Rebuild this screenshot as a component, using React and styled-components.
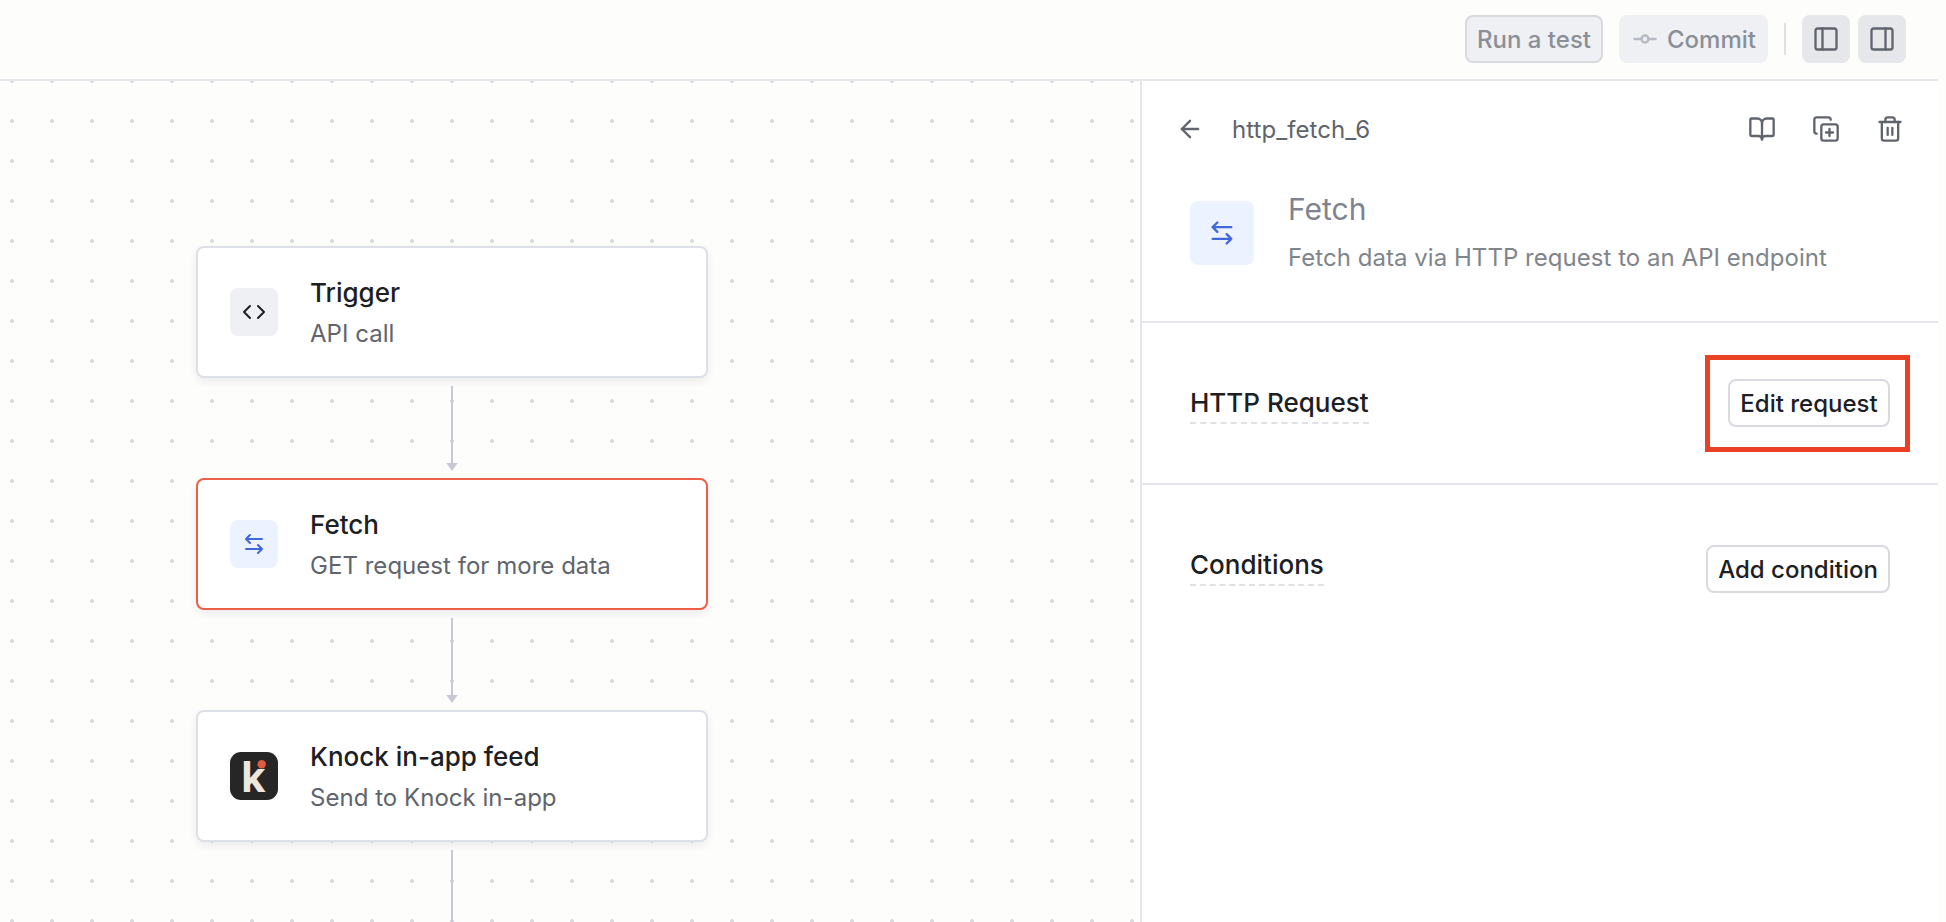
import React from "react";
import styled, { createGlobalStyle, css } from "styled-components";
import {
  ArrowLeft,
  BookOpen,
  CopyPlus,
  GitCommitHorizontal,
  PanelLeft,
  PanelRight,
  Trash2,
} from "lucide-react";

const GlobalStyle = createGlobalStyle`
  * { box-sizing: border-box; }
  body {
    margin: 0;
    overflow: hidden;
    background: #fdfdfc;
    font-family: Inter, "Liberation Sans", sans-serif;
    color: #1c2024;
  }
  h1, h2, h3, p { margin: 0; }
  svg { display: block; flex: none; overflow: visible; }
`;

const Page = styled.div`
  display: flex;
  flex-direction: column;
  width: 100vw;
  height: 100vh;
  padding-right: 8px;
`;

const TopBar = styled.header`
  display: flex;
  align-items: center;
  justify-content: flex-end;
  flex: none;
  gap: 16px;
  height: 81px;
  padding: 0 32px 1px 0;
  border-bottom: 2px solid #e5e6eb;
`;

const buttonVariants = {
  outline: css`
    background: #fff;
    border-color: #d9d9e0;
    color: #1c2024;
  `,
  disabled: css`
    background: #eff0f3;
    border-color: #d8dade;
    color: #8a8f97;
  `,
  soft: css`
    background: #eff0f3;
    border-color: #eff0f3;
    color: #8a8f97;
  `,
};

const Button = styled.button`
  display: flex;
  align-items: center;
  justify-content: center;
  gap: 8px;
  width: ${(p) => p.$width}px;
  height: 48px;
  padding: 0;
  border: 2px solid;
  border-radius: 8px;
  font: 500 24px/32px Inter, "Liberation Sans", sans-serif;
  white-space: nowrap;
  ${(p) => buttonVariants[p.$variant || "outline"]}

  svg { color: #b6bac2; }
`;

const ButtonLabel = styled.span`
  padding-top: 2px;
`;

const Separator = styled.span`
  width: 2px;
  height: 32px;
  background: #dde0e4;
`;

const ToggleGroup = styled.div`
  display: flex;
  gap: 8px;
`;

const IconButton = styled.button`
  display: grid;
  place-items: center;
  width: 48px;
  height: 48px;
  padding: 0;
  border: 0;
  border-radius: 8px;
  background: ${(p) => (p.$active ? "#e6e7ea" : "transparent")};
  color: #60646c;
`;

const Workspace = styled.div`
  display: flex;
  flex: 1;
  min-height: 0;
`;

const Canvas = styled.main`
  display: flex;
  flex-direction: column;
  width: 1140px;
  padding: 165px 0 0 196px;
  overflow: hidden;
  background: radial-gradient(circle at center, #d9d9e0 1.7px, transparent 2.2px) -8px -20px / 40px 40px;
`;

const StepCard = styled.section`
  display: flex;
  align-items: center;
  flex: none;
  gap: 32px;
  width: 512px;
  height: 132px;
  padding: 0 32px;
  border: 2px solid ${(p) => (p.$selected ? "#ee5f47" : "#dde1e6")};
  border-radius: 8px;
  background: #fff;
  box-shadow: 0 4px 8px rgba(28, 32, 36, 0.08);
`;

const IconTile = styled.div`
  display: grid;
  place-items: center;
  flex: none;
  width: ${(p) => p.$size || 48}px;
  height: ${(p) => p.$size || 48}px;
  border-radius: 8px;
  background: ${(p) => (p.$blue ? "#ecf2ff" : "#eff0f3")};
  color: ${(p) => (p.$blue ? "#4068dc" : "#1c2024")};
`;

const StepText = styled.div`
  display: flex;
  flex-direction: column;
  gap: 1px;
  padding-top: 3px;
`;

const StepTitle = styled.h3`
  font-size: 26px;
  font-weight: 500;
  line-height: 40px;
`;

const StepSubtitle = styled.p`
  font-size: 24px;
  line-height: 40px;
  letter-spacing: 0.03px;
  color: #60646c;
`;

const Connector = styled.div`
  display: flex;
  flex-direction: column;
  align-items: center;
  flex: none;
  width: 512px;
  height: 100px;
  padding: 8px 0 7px;
`;

const ConnectorLine = styled.div`
  flex: 1;
  width: 2px;
  background: #c8c7d6;
`;

const Panel = styled.aside`
  flex: 1;
  border-left: 2px solid #e5e6eb;
  background: #fff;
`;

const PanelHeader = styled.div`
  display: flex;
  align-items: center;
  gap: 16px;
  height: 96px;
  padding: 0 24px;
`;

const StepKey = styled.span`
  flex: 1;
  padding: 2px 0 0 2px;
  font-size: 24px;
  line-height: 32px;
  letter-spacing: 0.06px;
  color: #60646c;
`;

const PanelIntro = styled.div`
  display: flex;
  gap: 34px;
  height: 146px;
  padding: 8px 48px 0;
  border-bottom: 2px solid #e5e6eb;
`;

const IntroIcon = styled.div`
  padding-top: 16px;
`;

const IntroTitle = styled.h1`
  font-size: 30px;
  font-weight: 400;
  line-height: 48px;
  color: #80838d;
`;

const IntroDescription = styled.p`
  padding-top: 1px;
  font-size: 24px;
  line-height: 48px;
  letter-spacing: 0.04px;
  color: #80858b;
`;

const PanelSection = styled.section`
  display: flex;
  align-items: flex-start;
  justify-content: space-between;
  height: 162px;
  padding: ${(p) => p.$top}px 48px 0;
  border-bottom: ${(p) => (p.$last ? "0" : "2px solid #e5e6eb")};
`;

const SectionTitle = styled.h2`
  margin-top: ${(p) => p.$offset}px;
  padding-bottom: 1px;
  border-bottom: 2px dashed #dfe1e5;
  font-size: 26px;
  font-weight: 500;
  line-height: 36px;
`;

const Highlight = styled.div`
  padding: 19px 15px 20px 18px;
  margin: -24px -20px 0 0;
  border: 5px solid #e94026;
`;

function CodeIcon() {
  return (
    <svg width="24" height="24" viewBox="0 0 24 24" fill="none" stroke="currentColor" strokeWidth="2" strokeLinecap="round" strokeLinejoin="round">
      <path d="M8 6L2 12l6 6M16 6l6 6-6 6" />
    </svg>
  );
}

function SwapIcon({ size = 24 }) {
  return (
    <svg width={size} height={size} viewBox="0 0 24 24" fill="none" stroke="currentColor" strokeWidth="2" strokeLinecap="round" strokeLinejoin="round">
      <path d="M20 7H4M8 3L4 7l4 4M4 17h16M16 13l4 4-4 4" />
    </svg>
  );
}

function KnockLogo() {
  return (
    <svg width="48" height="48" viewBox="0 0 48 48">
      <rect width="48" height="48" rx="11" fill="#262626" />
      <text x="11.2" y="40" fill="#eee7dd" fontFamily="Inter, sans-serif" fontSize="42" fontWeight="700">k</text>
      <circle cx="31.7" cy="12.3" r="4.2" fill="#dd5c43" />
    </svg>
  );
}

function ArrowTip() {
  return (
    <svg width="12" height="8" viewBox="0 0 12 8" fill="#c8c7d6">
      <path d="M.3 0h11.4L6 8z" />
    </svg>
  );
}

function Step({ icon, title, subtitle, selected }) {
  return (
    <>
      <StepCard $selected={selected}>
        {icon}
        <StepText>
          <StepTitle>{title}</StepTitle>
          <StepSubtitle>{subtitle}</StepSubtitle>
        </StepText>
      </StepCard>
      <Connector>
        <ConnectorLine />
        <ArrowTip />
      </Connector>
    </>
  );
}

export default function App() {
  return (
    <Page>
      <GlobalStyle />
      <TopBar>
        <Button $variant="disabled" $width={138}><ButtonLabel>Run a test</ButtonLabel></Button>
        <Button $variant="soft" $width={149}>
          <GitCommitHorizontal size={28} />
          <ButtonLabel>Commit</ButtonLabel>
        </Button>
        <Separator />
        <ToggleGroup>
          <IconButton $active aria-label="Toggle left panel"><PanelLeft size={28} /></IconButton>
          <IconButton $active aria-label="Toggle right panel"><PanelRight size={28} /></IconButton>
        </ToggleGroup>
      </TopBar>
      <Workspace>
        <Canvas>
          <Step icon={<IconTile><CodeIcon /></IconTile>} title="Trigger" subtitle="API call" />
          <Step selected icon={<IconTile $blue><SwapIcon /></IconTile>} title="Fetch" subtitle="GET request for more data" />
          <Step icon={<KnockLogo />} title="Knock in-app feed" subtitle="Send to Knock in-app" />
        </Canvas>
        <Panel>
          <PanelHeader>
            <IconButton aria-label="Back"><ArrowLeft size={28} /></IconButton>
            <StepKey>http_fetch_6</StepKey>
            <IconButton aria-label="Docs"><BookOpen size={28} /></IconButton>
            <IconButton aria-label="Duplicate"><CopyPlus size={28} /></IconButton>
            <IconButton aria-label="Delete"><Trash2 size={28} /></IconButton>
          </PanelHeader>
          <PanelIntro>
            <IntroIcon>
              <IconTile $blue $size={64}><SwapIcon size={28} /></IconTile>
            </IntroIcon>
            <div>
              <IntroTitle>Fetch</IntroTitle>
              <IntroDescription>Fetch data via HTTP request to an API endpoint</IntroDescription>
            </div>
          </PanelIntro>
          <PanelSection $top={56}>
            <SectionTitle $offset={6}>HTTP Request</SectionTitle>
            <Highlight>
              <Button $width={162}><ButtonLabel>Edit request</ButtonLabel></Button>
            </Highlight>
          </PanelSection>
          <PanelSection $top={60} $last>
            <SectionTitle $offset={2}>Conditions</SectionTitle>
            <Button $width={184}><ButtonLabel>Add condition</ButtonLabel></Button>
          </PanelSection>
        </Panel>
      </Workspace>
    </Page>
  );
}
